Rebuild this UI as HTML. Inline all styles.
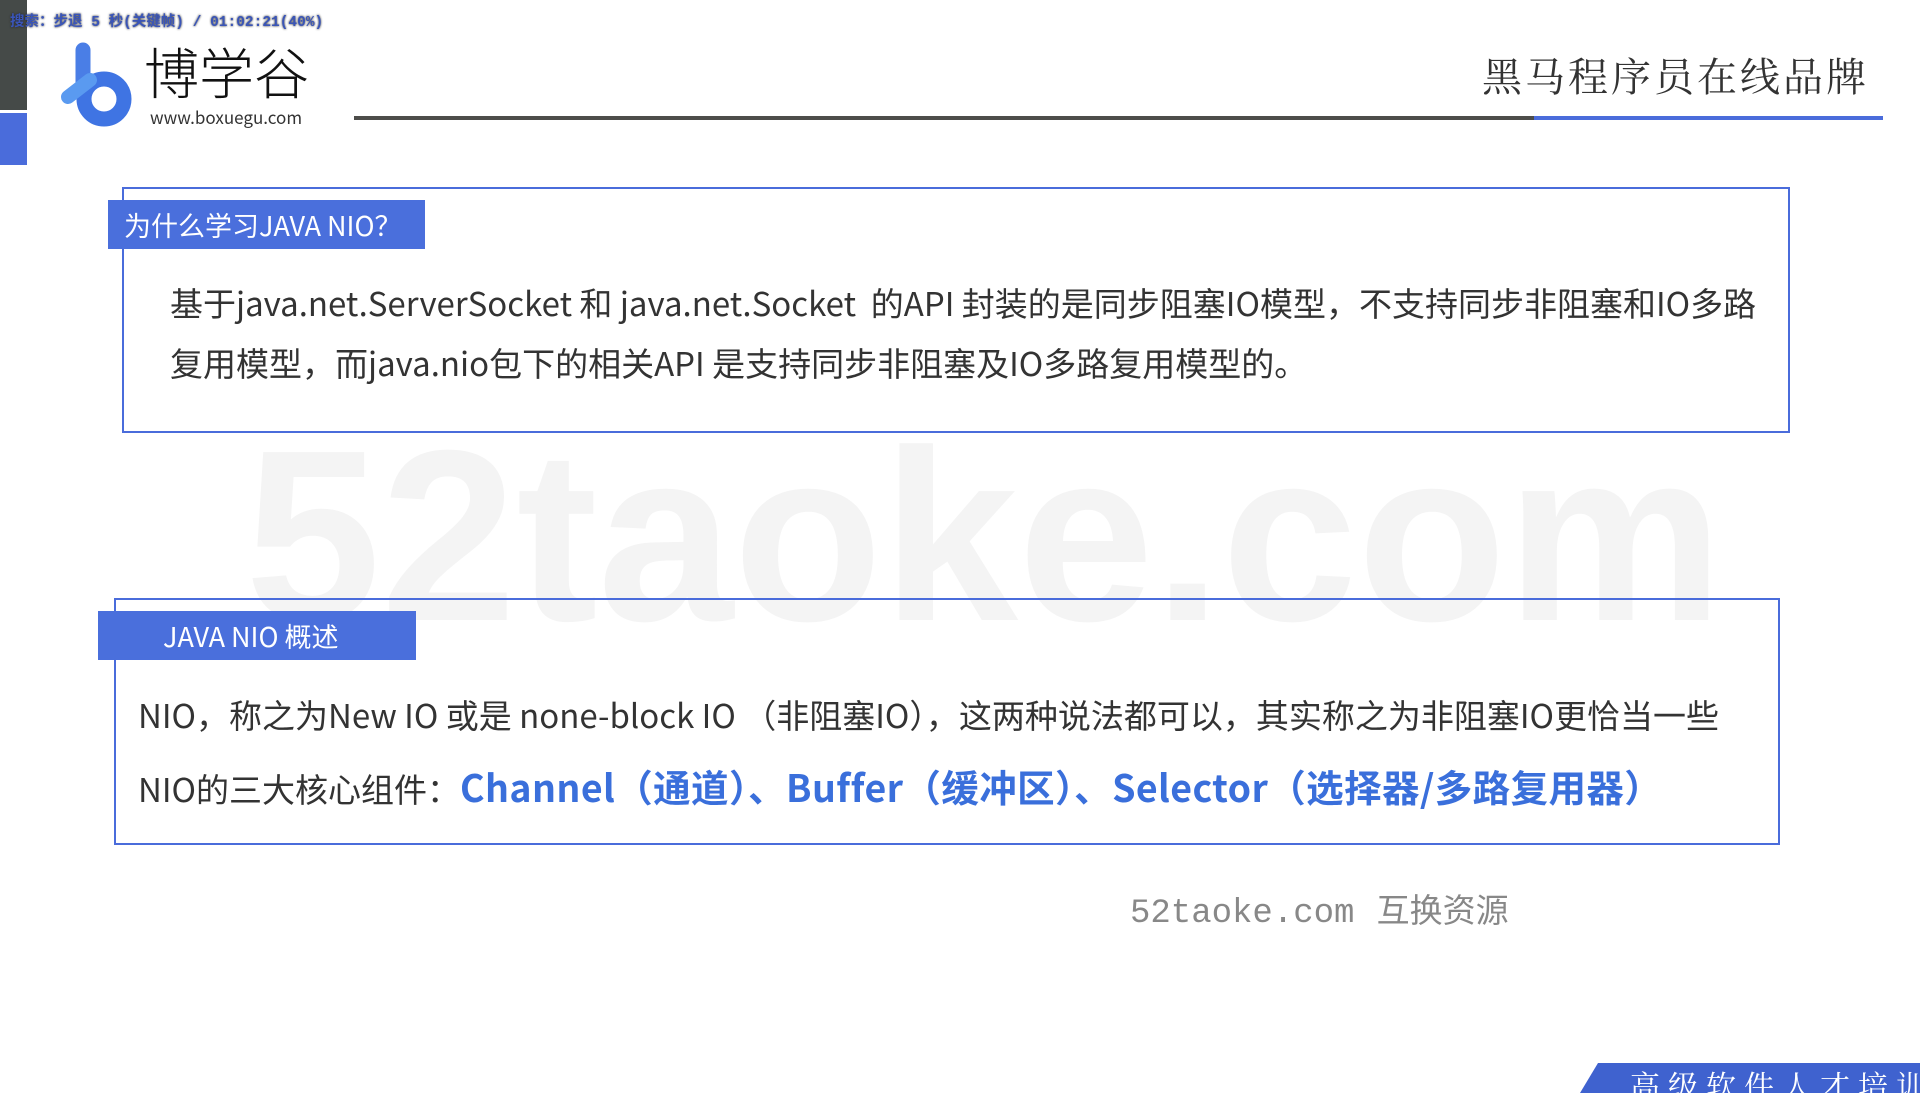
<!DOCTYPE html>
<html><head><meta charset="utf-8"><style>
*{margin:0;padding:0;box-sizing:border-box}
body{width:1920px;height:1080px;background:#fff;position:relative;overflow:hidden;font-family:"Noto Sans CJK SC","Liberation Sans",sans-serif;color:#333}
.a{position:absolute;white-space:nowrap}
.box{position:absolute;border:2px solid #4a6cdb}
.tag{position:absolute;background:#4a6fdc;color:#fff;font-size:27px;line-height:49px}
.t{font-size:33px;color:#333;line-height:40px}
.b{color:#3a6fdb;font-weight:bold;font-size:37.5px;letter-spacing:0.4px}
</style></head><body>
<div class="a" style="left:0;top:0;width:27px;height:110px;background:#454a48"></div>
<div class="a" style="left:0;top:113px;width:27px;height:52px;background:#4a6cdb"></div>
<div class="a" style="left:10px;top:10px;font-family:'Liberation Mono','Noto Sans CJK SC',monospace;font-size:14.5px;font-weight:bold;color:#3a55b8;text-shadow:0 0 2px #222">搜索：步退 5 秒(关键帧) / 01:02:21(40%)</div>
<svg class="a" style="left:60px;top:42px" width="75" height="85" viewBox="0 0 75 85">
<line x1="23" y1="8" x2="23" y2="45" stroke="#4a7ee6" stroke-width="15" stroke-linecap="round"/>
<circle cx="44" cy="57" r="20" fill="none" stroke="#3f74e3" stroke-width="15"/>
<line x1="8" y1="55" x2="30" y2="38" stroke="#5a9af0" stroke-width="14" stroke-linecap="round"/>
</svg>
<div class="a" style="left:144px;top:40px;font-size:55px;line-height:60px;color:#111;font-weight:300">博学谷</div>
<div class="a" style="left:150px;top:104px;font-size:17px;color:#333">www.boxuegu.com</div>
<div class="a" style="left:354px;top:116px;width:1180px;height:4px;background:#4d4d4a"></div>
<div class="a" style="left:1534px;top:116px;width:349px;height:4px;background:#4a6cdb"></div>
<div class="a" style="left:1482px;top:46px;font-family:'Noto Serif CJK SC',serif;font-size:40px;letter-spacing:3px;color:#333">黑马程序员在线品牌</div>
<div class="a" style="left:245px;top:396px;font-family:'Liberation Sans',sans-serif;font-size:244px;line-height:280px;font-weight:bold;color:#f4f4f4">52taoke.com</div>
<div class="box" style="left:122px;top:187px;width:1668px;height:246px"></div>
<div class="tag" style="left:108px;top:200px;width:317px;padding-left:16px">为什么学习JAVA NIO？</div>
<div class="a t" style="left:170px;top:282px">基于java.net.ServerSocket 和 java.net.Socket &nbsp;的API 封装的是同步阻塞IO模型，不支持同步非阻塞和IO多路</div>
<div class="a t" style="left:170px;top:342px">复用模型，而java.nio包下的相关API 是支持同步非阻塞及IO多路复用模型的。</div>
<div class="box" style="left:114px;top:598px;width:1666px;height:247px"></div>
<div class="tag" style="left:98px;top:611px;width:318px;padding-left:65px">JAVA NIO 概述</div>
<div class="a t" style="left:138px;top:694px">NIO，称之为New IO 或是 none-block IO （非阻塞IO），这两种说法都可以，其实称之为非阻塞IO更恰当一些</div>
<div class="a t" style="left:138px;top:766px">NIO的三大核心组件：<span class="b">Channel（通道）、Buffer（缓冲区）、Selector（选择器/多路复用器）</span></div>
<div class="a" style="left:1130px;top:884px;font-size:33px;color:#888"><span style="font-family:'Liberation Mono',monospace;font-size:34px">52taoke.com</span>&nbsp;&nbsp;&nbsp;互换资源</div>
<div class="a" style="left:1580px;top:1063px;width:360px;height:30px;background:#3f62cf;clip-path:polygon(5% 0,100% 0,100% 100%,0 100%)"></div>
<div class="a" style="left:1630px;top:1062px;font-family:'Noto Serif CJK SC',serif;font-size:30px;color:#fff;letter-spacing:8px">高级软件人才培训专家</div>
</body></html>
